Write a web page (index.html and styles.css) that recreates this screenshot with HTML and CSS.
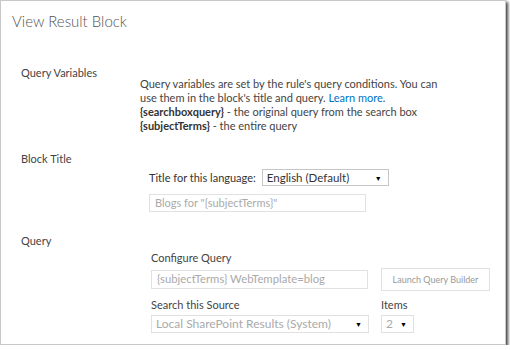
FILE: index.html
```html
<!DOCTYPE html>
<html lang="en">
<head>
<meta charset="UTF-8">
<meta name="viewport" content="width=device-width, initial-scale=1.0">
<title>View Result Block</title>
<link rel="stylesheet" href="styles.css">
</head>
<body>
<div class="frame">
  <h2 class="title">View Result Block</h2>

  <div class="section section-vars">
    <div class="label">Query Variables</div>
    <div class="content">
      Query variables are set by the rule's query conditions. You can<br>
      use them in the block's title and query. <a href="#">Learn more</a>.<br>
      <b>{searchboxquery}</b> - the original query from the search box<br>
      <b>{subjectTerms}</b> - the entire query
    </div>
  </div>

  <div class="section section-title">
    <div class="label">Block Title</div>
    <div class="content">
      <div class="lang-row">
        <span>Title for this language:</span>
        <div class="select select-lang"><span>English (Default)</span><span class="arrow">&#9660;</span></div>
      </div>
      <div class="field field-title">Blogs for "{subjectTerms}"</div>
    </div>
  </div>

  <div class="section section-query">
    <div class="label">Query</div>
    <div class="content query-grid">
      <div class="span-2">Configure Query</div>
      <div class="field field-query">{subjectTerms} WebTemplate=blog</div>
      <div class="button">Launch Query Builder</div>
      <div class="gap-top">Search this Source</div>
      <div class="gap-top">Items</div>
      <div class="select select-off select-source"><span>Local SharePoint Results (System)</span><span class="arrow">&#9660;</span></div>
      <div class="select select-off select-items"><span>2</span><span class="arrow">&#9660;</span></div>
    </div>
  </div>
</div>
</body>
</html>
```

FILE: styles.css
```css
body {
  margin: 0;
  padding: 0;
  background-color: #fff;
  font-family: Lato, "Open Sans", Arial, sans-serif;
  color: #444;
}
.frame {
  width: 504px;
  height: 343px;
  border: 1px solid #c8c8c8;
  box-shadow: 2px 2px 3px rgba(0, 0, 0, 0.75);
  overflow: hidden;
}
.title {
  margin: 0;
  padding: 10px 0 0 11px;
  font-size: 15px;
  line-height: 20px;
  font-weight: 300;
  color: #555;
}
.section {
  display: flex;
  align-items: flex-start;
  font-size: 11px;
  line-height: 14px;
}
.label {
  width: 119px;
  padding-left: 20px;
  flex-shrink: 0;
}
.section-vars {
  margin-top: 35px;
}
.section-vars .content {
  padding-top: 11px;
}
.section-vars b {
  color: #333;
}
a {
  color: #0072c6;
  text-decoration: none;
}
.section-title {
  margin-top: 19px;
}
.section-title .content {
  padding-top: 17px;
  margin-left: 9px;
}
.lang-row {
  display: flex;
  align-items: center;
  gap: 6px;
  color: #333;
}
.select {
  display: flex;
  justify-content: space-between;
  align-items: center;
  box-sizing: border-box;
  height: 18px;
  padding: 0 6px 0 4px;
  background-color: #fff;
  border: 1px solid #e1e1e1;
  color: #aaa;
}
.arrow {
  font-size: 7px;
  color: #000;
}
.select-lang {
  width: 127px;
  height: 17px;
  border-color: #c6c6c6;
  color: #333;
  font-size: 11.5px;
}
.field {
  box-sizing: border-box;
  height: 18px;
  padding: 0 5px;
  line-height: 16px;
  border: 1px solid #e1e1e1;
  color: #aaa;
}
.field-title {
  width: 217px;
  margin-top: 8px;
}
.section-query {
  margin-top: 22px;
}
.query-grid {
  display: grid;
  grid-template-columns: 218px auto;
  column-gap: 12px;
  align-items: center;
  padding-top: 17px;
  margin-left: 11px;
}
.span-2 {
  grid-column: span 2;
}
.field-query {
  width: 217px;
  height: 19px;
  margin-top: 3px;
  font-size: 11.3px;
}
.button {
  width: 109px;
  height: 23px;
  box-sizing: border-box;
  margin-top: 3px;
  border: 1px solid #e1e1e1;
  font-size: 9px;
  line-height: 21px;
  text-align: center;
  color: #999;
}
.gap-top {
  margin-top: 7px;
}
.select-off {
  margin-top: 3px;
}
.select-source {
  width: 218px;
  font-size: 12px;
}
.select-items {
  width: 33px;
  font-size: 12px;
  color: #aaa;
}
```
